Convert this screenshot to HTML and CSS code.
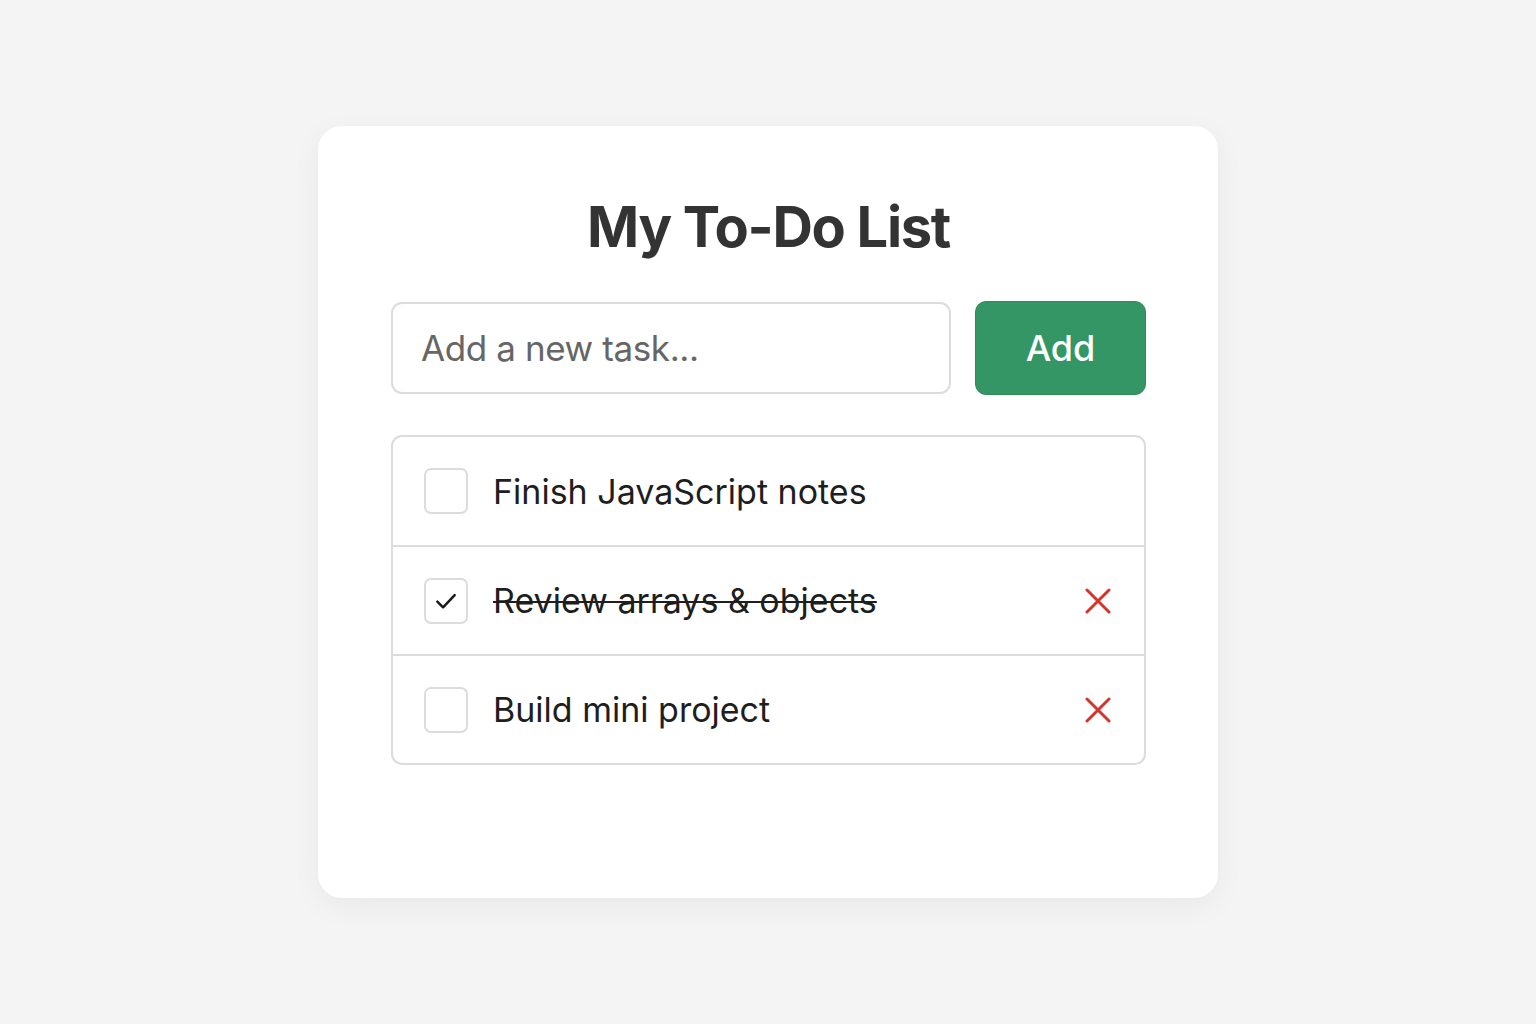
FILE: index.html
```html
<!DOCTYPE html>
<html lang="en">
<head>
<meta charset="utf-8">
<title>My To-Do List</title>
<link rel="stylesheet" href="styles.css">
</head>
<body>
<main class="card">
  <h1 class="title">My To-Do List</h1>
  <form class="add-row">
    <input class="task-input" type="text" placeholder="Add a new task...">
    <button class="add-btn" type="button">Add</button>
  </form>
  <ul class="list">
    <li class="item">
      <span class="check"></span>
      <span class="label">Finish JavaScript notes</span>
    </li>
    <li class="item done">
      <span class="check">
        <svg viewBox="0 0 24 24" width="26" height="26"><path d="M4 12.5 L9.3 17.8 L20 6.5" fill="none" stroke="#1a1a1a" stroke-width="2.3" stroke-linecap="round" stroke-linejoin="round"/></svg>
      </span>
      <span class="label">Review arrays &amp; objects</span>
      <span class="remove"><svg viewBox="0 0 26 26" width="26" height="26"><path d="M2 2 L24 24 M24 2 L2 24" stroke="#d6332b" stroke-width="3" stroke-linecap="round"/></svg></span>
    </li>
    <li class="item">
      <span class="check"></span>
      <span class="label">Build mini project</span>
      <span class="remove"><svg viewBox="0 0 26 26" width="26" height="26"><path d="M2 2 L24 24 M24 2 L2 24" stroke="#d6332b" stroke-width="3" stroke-linecap="round"/></svg></span>
    </li>
  </ul>
</main>
</body>
</html>
```
FILE: styles.css
```css
* { box-sizing: border-box; }
html, body { margin: 0; padding: 0; }
body {
  background: #f4f4f4;
  font-family: Inter, "Liberation Sans", sans-serif;
  min-height: 1024px;
  padding-top: 126px;
}
.card {
  width: 900px;
  height: 772px;
  margin: 0 auto;
  background: #fff;
  border-radius: 24px;
  box-shadow: 0 8px 30px rgba(0,0,0,0.05);
  padding: 66px 72px 0 73px;
}
.title {
  margin: 0;
  text-align: center;
  font-size: 56px;
  font-weight: 700;
  color: #333;
  line-height: 70px;
  letter-spacing: -1.3px;
}
.add-row {
  display: flex;
  gap: 24px;
  margin-top: 39px;
  align-items: center;
}
.task-input {
  width: 560px;
  height: 92px;
  border: 2px solid #dcdcdc;
  border-radius: 11px;
  padding: 0 28px;
  font-family: inherit;
  font-size: 35px;
  letter-spacing: -0.4px;
  color: #333;
  outline: none;
}
.task-input::placeholder { color: #666; }
.add-btn {
  width: 171px;
  height: 94px;
  border: 1px solid #2b8a58;
  border-radius: 11px;
  background: #339664;
  color: #fff;
  font-family: inherit;
  font-size: 36px;
  font-weight: 500;
  padding: 0;
}
.list {
  list-style: none;
  margin: 40px 0 0;
  padding: 0;
  width: 755px;
  border: 2px solid #dcdcdc;
  border-radius: 11px;
}
.item {
  display: flex;
  align-items: center;
  height: 109px;
  padding: 0 33px 0 31px;
  border-top: 2px solid #dcdcdc;
}
.item:first-child { border-top: none; height: 108px; }
.check {
  width: 44px;
  height: 46px;
  border: 2px solid #dcdcdc;
  border-radius: 7px;
  display: flex;
  align-items: center;
  justify-content: center;
  flex-shrink: 0;
}
.label {
  margin-left: 25px;
  font-size: 34px;
  color: #1e1e1e;
  flex: 1;
}
.done .label { text-decoration: line-through; text-decoration-thickness: 2px; }
.remove { display: flex; width: 26px; height: 26px; }
```
